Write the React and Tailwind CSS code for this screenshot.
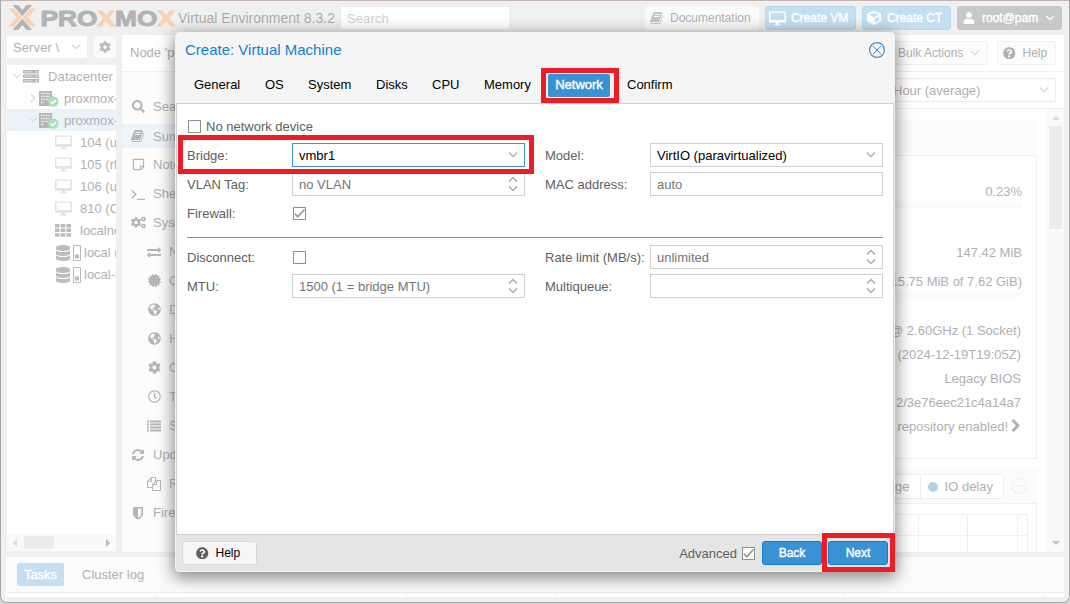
import React from "react";
import {
  FaSearch, FaCogs, FaCog, FaCertificate, FaGlobeAmericas, FaRegClock,
  FaCube, FaUser, FaQuestionCircle, FaRegStickyNote, FaDatabase,
} from "react-icons/fa";

const FONT = "font-['Liberation_Sans',Arial,sans-serif]";

const BOOK = "M1639 478q40 57 18 129l-275 906q-19 64-76.5 107.5t-122.5 43.5h-923q-77 0-148.5-53.5t-99.5-131.5q-24-67-2-127 0-4 3-27t4-37q1-8-3-21.5t-3-19.5q2-11 8-21t16.5-23.5 16.5-23.5q23-38 45-91.5t30-91.5q3-10 .5-30t-.5-28q3-11 17-28t17-23q21-36 42-92t25-90q1-9-2.5-32t.5-28q4-13 22-30.5t22-22.5q19-26 42.5-84.5t27.5-96.5q1-8-3-25.5t-2-26.5q2-8 9-18t18-23 17-21q8-12 16.5-30.5t15-35 16-36 19.5-32 26.5-23.5 36-11.5 47.5 5.5l-1 3q38-9 51-9h761q74 0 114 56t18 130l-274 906q-36 119-71.5 153.5t-128.5 34.5h-869q-27 0-38 15-11 16-1 43 24 70 144 70h923q29 0 56-15.5t35-41.5l300-987q7-22 5-57 38 15 59 43zm-1064 2q-4 13 2 22.5t20 9.5h608q13 0 25.5-9.5t16.5-22.5l21-64q4-13-2-22.5t-20-9.5h-608q-13 0-25.5 9.5t-16.5 22.5zm-83 256q-4 13 2 22.5t20 9.5h608q13 0 25.5-9.5t16.5-22.5l21-64q4-13-2-22.5t-20-9.5h-608q-13 0-25.5 9.5t-16.5 22.5z";
const EXCHANGE = "M1792 1184v192q0 13-9.5 22.5t-22.5 9.5h-1376v192q0 13-9.5 22.5t-22.5 9.5q-12 0-24-10l-319-320q-9-9-9-22 0-14 9-23l320-320q9-9 23-9 13 0 22.5 9.5t9.5 22.5v192h1376q13 0 22.5 9.5t9.5 22.5zm0-544q0 14-9 23l-320 320q-9 9-23 9-13 0-22.5-9.5t-9.5-22.5v-192h-1376q-13 0-22.5-9.5t-9.5-22.5v-192q0-13 9.5-22.5t22.5-9.5h1376v-192q0-14 9-23t23-9q12 0 24 10l319 319q9 9 9 23z";
const REFRESH = "M1639 1056q0 5-1 7-64 268-268 434.5t-478 166.5q-146 0-282.5-55t-243.5-157l-129 129q-19 19-45 19t-45-19-19-45v-448q0-26 19-45t45-19h448q26 0 45 19t19 45-19 45l-137 137q71 66 161 102t187 36q134 0 250-65t186-179q11-17 53-117 8-23 30-23h192q13 0 22.5 9.5t9.5 22.5zm25-800v448q0 26-19 45t-45 19h-448q-26 0-45-19t-19-45 19-45l138-138q-148-137-349-137-134 0-250 65t-186 179q-11 17-53 117-8 23-30 23h-199q-13 0-22.5-9.5t-9.5-22.5v-7q65-268 270-434.5t480-166.5q146 0 284 55.5t245 156.5l130-129q19-19 45-19t45 19 19 45z";
const FILES = "M1696 384q40 0 68 28t28 68v1216q0 40-28 68t-68 28h-960q-40 0-68-28t-28-68v-288h-544q-40 0-68-28t-28-68v-672q0-40 20-88t48-76l408-408q28-28 76-48t88-20h416q40 0 68 28t28 68v328q68-40 128-40h416zm-544 213l-299 299h299v-299zm-640-384l-299 299h299v-299zm196 647l316-316v-416h-384v416q0 40-28 68t-68 28h-416v640h512v-256q0-40 20-88t48-76zm956 804v-1152h-384v416q0 40-28 68t-68 28h-416v640h896z";
const CHEVRON_BOLD = "M1363 877l-742 742q-19 19-45 19t-45-19l-166-166q-19-19-19-45t19-45l531-531-531-531q-19-19-19-45t19-45l166-166q19-19 45-19t45 19l742 742q19 19 19 45t-19 45z";

const Awesome = ({ d, className = "size-[14px]" }) => (
  <svg viewBox="0 0 1792 1792" className={`shrink-0 ${className}`} fill="currentColor"><path d={d} /></svg>
);
const Book = () => <Awesome d={BOOK} />;
const Exchange = () => <Awesome d={EXCHANGE} />;
const Refresh = () => <Awesome d={REFRESH} />;
const Files = () => <Awesome d={FILES} />;
const Terminal = () => (
  <svg viewBox="0 0 14 14" className="size-[14px]" fill="none" stroke="currentColor" strokeWidth="1.3">
    <path d="M0.8 3.2 4.8 7.2 0.8 11.2M6 12.3h8" />
  </svg>
);
const Cogs = () => <FaCogs className="size-[15px] shrink-0" />;
const Shield = () => (
  <svg viewBox="0 0 14 14" className="size-[14px]" fill="currentColor">
    <path fillRule="evenodd" d="M2 1h10v6.500q0 4-5 6-5-2-5-6zM7 2.600v9.200q3.400-1.700 3.400-4.300V2.600z" />
  </svg>
);
const Rows = () => (
  <svg viewBox="0 0 14 12" className="h-[12px] w-[14px] shrink-0" fill="currentColor">
    {[0.5, 3.5, 6.5, 9.5].map((y) => <path key={y} d={`M0 ${y}h2v2H0zM3 ${y}h11v2H3z`} />)}
  </svg>
);
const Grid = () => (
  <svg viewBox="0 0 16 13" className="h-[13px] w-[16px] shrink-0 text-[#bcbcbc]" fill="currentColor">
    {[0, 4.6, 9.2].map((y) => <path key={y} d={`M0 ${y}h4.600v3.500H0zM5.700 ${y}h4.600v3.500H5.700zM11.400 ${y}h4.600v3.500h-4.600z`} />)}
  </svg>
);
const Desktop = ({ className = "h-[15px] w-[17px]" }) => (
  <svg viewBox="0 0 17 15" className={`shrink-0 ${className}`} fill="currentColor">
    <path fillRule="evenodd" d="M1.2 0.5h14.6q1.2 0 1.2 1.2v9q0 1-1.2 1H10v1.3l1.8.5v1H5.2v-1L7 13v-1.300H1.200Q0 11.700 0 10.700v-9Q0 .5 1.200 .5zM1.500 1.800v7.200h14V1.800z" />
  </svg>
);
const Chevron = ({ className = "text-[#a0a0a0]" }) => (
  <svg viewBox="0 0 10 6" className={`h-[6px] w-[10px] shrink-0 ${className}`} fill="none" stroke="currentColor" strokeWidth="1.2">
    <path d="M1 0.700 5 4.700 9 0.700" />
  </svg>
);
const Spinner = () => (
  <svg viewBox="0 0 10 16" className="h-[16px] w-[10px] shrink-0 text-[#a0a0a0]" fill="none" stroke="currentColor" strokeWidth="1.2">
    <path d="M1 5.500 5 1.500 9 5.500M1 10.500 5 14.500 9 10.500" />
  </svg>
);

const Logo = () => (
  <svg viewBox="0 0 168 26" className="h-[26px] w-[168px] shrink-0">
    <path d="M0.500 3.500h5.500L14 12.500 6 21.500H0.500L8.500 12.500z" fill="#f9d2b3" />
    <path d="M28 3.500H22.500L14.500 12.500 22.500 21.500H28L20 12.500z" fill="#f9d2b3" />
    <path d="M4.500 0h5.700L14.300 5 18.500 0h5.700L14.300 11.300zM4.500 25h5.700l4.100-5 4.200 5h5.700L14.300 13.700z" fill="#b3b3b3" />
    <text x="32.500" y="20.600" textLength="134.500" lengthAdjust="spacingAndGlyphs" fontSize="22" fontWeight="700" fontFamily="Liberation Sans, Arial, sans-serif" fill="#b3b3b3" stroke="#b3b3b3" strokeWidth="0.900">
      PRO<tspan fill="#f9d2b3" stroke="#f9d2b3">X</tspan>MO<tspan fill="#f9d2b3" stroke="#f9d2b3">X</tspan>
    </text>
  </svg>
);

const Rack = () => (
  <svg viewBox="0 0 16 13" className="h-[13px] w-[16px] shrink-0">
    {[0, 4.500, 9].map((y) => (
      <g key={y}>
        <rect x="0" y={y} width="16" height="3.600" rx=".5" fill="#b5b5b5" />
        <path d={`M1.500 ${y + 1.800}h8`} stroke="#e4e4e4" strokeWidth="1" />
        <path d={`M12.500 ${y + 1.800}h2`} stroke="#eee" strokeWidth="1.200" />
      </g>
    ))}
  </svg>
);
const NodeIcon = () => (
  <svg viewBox="0 0 20 17" className="h-[17px] w-[20px] shrink-0">
    <path d="M0 1h13v15H0z" fill="#b5b5b5" />
    <path d="M2 3.500h9M2 6.500h9M2 9.500h9M2 12.500h3" stroke="#ededed" strokeWidth="1.400" strokeDasharray="1.700 .8" />
    <circle cx="14.300" cy="11.500" r="5.200" fill="#a9dfb9" />
    <path d="M11.700 11.500l2 2 3.400-3.600" stroke="#fff" strokeWidth="1.500" fill="none" />
  </svg>
);
const Storage = () => (
  <span className="flex shrink-0 items-center gap-[3px] pt-px text-[#bcbcbc]">
    <FaDatabase className="h-[16px] w-[14px]" />
    <svg viewBox="0 0 8 16" className="h-[16px] w-[8px]"><path d="M.5.500h7v15h-7z" fill="none" stroke="currentColor" /><path d="M2 9.500h4v4H2z" fill="currentColor" /></svg>
  </span>
);

const guests = ["104 (ubuntu)", "105 (rhel)", "106 (ubuntu)", "810 (CT)"];

const TreeRow = ({ icon, pad, text, active, arrow }) => (
  <div className={`flex h-[22px] shrink-0 items-center whitespace-nowrap ${pad} ${active ? "bg-[#eaf3fa]" : ""}`}>
    {arrow && <Chevron className={`text-[#dcdcdc] ${arrow}`} />}
    {icon}
    {text}
  </div>
);

const Tree = () => (
  <div className="flex h-[486px] w-[109px] flex-col overflow-hidden bg-white text-[#b0b0b0]">
    <TreeRow pad="pl-[5px] gap-[1px]" arrow=" " icon={<><Rack /><span className="w-[7px]" /></>} text={<span className="tracking-[0.150px]">Datacenter</span>} />
    <TreeRow pad="pl-[21px] gap-[1px]" arrow="-rotate-90" icon={<><NodeIcon /><span className="w-[3px] shrink-0" /></>} text="proxmox-01" />
    <TreeRow pad="pl-[21px] gap-[1px]" arrow=" " active icon={<><NodeIcon /><span className="w-[3px] shrink-0" /></>} text="proxmox-02" />
    {guests.map((g) => (
      <TreeRow key={g} pad="pl-[48px] gap-[8px]" icon={<span className="text-[#e3e3e3]"><Desktop /></span>} text={g} />
    ))}
    <TreeRow pad="pl-[48px] gap-[9px]" icon={<Grid />} text="localnetwork" />
    <TreeRow pad="pl-[49px] gap-[3px]" icon={<Storage />} text="local (proxmox)" />
    <TreeRow pad="pl-[49px] gap-[3px]" icon={<Storage />} text="local-lvm" />
    <div className="mt-auto flex h-[17px] shrink-0 items-center bg-[#fafafa] px-[6px]">
      <span className="h-0 w-0 border-y-[4px] border-r-[4px] border-y-transparent border-r-[#dcdcdc]" />
      <span className="ml-[7px] h-[13px] w-[30px] bg-[#ececec]" />
      <span className="ml-auto h-0 w-0 border-y-[4px] border-l-[4px] border-y-transparent border-l-[#b8b8b8]" />
    </div>
  </div>
);

const menu = [
  [FaSearch, "Search"], [Book, "Summary", 0, true], [FaRegStickyNote, "Notes"], [Terminal, "Shell"], [Cogs, "System"],
  [Exchange, "Network", 1], [FaCertificate, "Certificates", 1], [FaGlobeAmericas, "DNS", 1], [FaGlobeAmericas, "Hosts", 1],
  [FaCog, "Options", 1], [FaRegClock, "Time", 1], [Rows, "System Log", 1], [Refresh, "Updates"], [Files, "Repositories", 1],
  [Shield, "Firewall"],
];

const SideMenu = () => (
  <nav className="w-[150px] shrink-0 bg-[#fcfcfc] pt-[20px]">
    {menu.map(([Icon, label, sub, active]) => (
      <div key={label} className={`flex items-center whitespace-nowrap ${active ? "mt-[3px] mb-[2px] h-[24px] bg-[#edf4fa]" : "h-[29px]"} ${sub ? "pl-[25px]" : "pl-[9px]"}`}>
        <span className="flex w-[14px] justify-center text-[13px] text-[#b5b5b5]"><Icon /></span>
        <span className={sub ? "ml-[8px] text-[#bdbdbd]" : "ml-[8px]"}>{label}</span>
      </div>
    ))}
  </nav>
);

const Stat = ({ children, className = "" }) => (
  <div className={`flex h-[24px] items-center justify-end whitespace-nowrap ${className}`}>{children}</div>
);

const Content = () => (
  <div className="flex min-w-0 flex-1 flex-col bg-white">
    <div className="flex h-[37px] shrink-0 items-center justify-end border-b border-[#efefef] pr-[8px]">
      <div className="flex h-[24px] w-[200px] items-center border border-[#ebebeb] pr-[6px] pl-[36px]">
        <span>Hour (average)</span>
        <Chevron className="ml-auto text-[#cfcfcf]" />
      </div>
    </div>
    <div className="flex min-h-0 flex-1">
      <div className="flex-1 overflow-hidden pt-[10px] pr-[10px] pl-[10px]">
        <div className="h-[36px] bg-[#fbfbfb]" />
        <div className="h-[304px] border border-[#efefef] px-[14px] pt-[23px]">
          <Stat>0.23%</Stat>
          <div className="h-[5px] bg-[#fafafa]" />
          <Stat className="mt-[32px]">147.42 MiB</Stat>
          <Stat className="mt-[5px]">RAM usage 4.05% (315.75 MiB of 7.62 GiB)</Stat>
          <div className="h-[4px] bg-[#fafafa]" />
          <div className="mt-[21px] pr-px">
            <Stat>Intel(R) Xeon(R) CPU @ 2.60GHz (1 Socket)</Stat>
            <Stat>Linux 6.8.12-5-pve (2024-12-19T19:05Z)</Stat>
            <Stat>Legacy BIOS</Stat>
            <Stat>pve-manager/8.3.2/3e76eec21c4a14a7</Stat>
            <Stat>Non production-ready repository enabled!<span className="-mr-[2px] ml-px"><Awesome d={CHEVRON_BOLD} className="size-[14px]" /></span></Stat>
          </div>
        </div>
        <div className="mt-[10px] flex h-[34px] items-center justify-end bg-[#fbfbfb] pr-[10px]">
          <div className="flex h-[25px] items-center rounded-[3px] border border-[#ededed] bg-white">
            <span className="flex h-full items-center border-r border-[#ededed] pr-[10px] pl-[12px]">CPU usage</span>
            <span className="flex items-center gap-[7px] pr-[10px] pl-[7px]"><i className="mt-[2px] size-[10px] rounded-full bg-[#b7cfe3]" />IO delay</span>
          </div>
          <svg viewBox="0 0 16 16" className="ml-[7px] size-[16px]" fill="none" stroke="#e3edf5"><circle cx="8" cy="8" r="7.300" /><path d="M3 8h10" /></svg>
        </div>
        <div className="h-[60px] border border-[#efefef] px-[8px] pt-[10px]">
          <svg viewBox="0 0 330 50" className="float-right h-[50px] w-[330px]" fill="none" stroke="#f0f0f0">
            <path d="M0 .5h329.500V50M0 21.500h330M220.500 0v50M269.500 0v50M319.500 0v50M171.500 0v50" />
          </svg>
        </div>
      </div>
      <div className="flex w-[17px] flex-col items-center bg-[#fafafa] pt-[7px] pb-[7px]">
        <span className="h-0 w-0 border-x-[4px] border-b-[4px] border-x-transparent border-b-[#dcdcdc]" />
        <span className="mt-[6px] h-[103px] w-[13px] bg-[#ececec]" />
        <span className="mt-auto h-0 w-0 border-x-[4px] border-t-[4px] border-x-transparent border-t-[#c4c4c4]" />
      </div>
    </div>
  </div>
);

const STRONG = "[-webkit-text-stroke:0.4px_currentColor]";

const HeaderButton = ({ className, children }) => (
  <div className={`flex h-[24px] shrink-0 items-center rounded-[3px] border text-[12px] whitespace-nowrap ${className}`}>{children}</div>
);

const Header = () => (
  <header className="flex h-[34px] shrink-0 items-center pr-[7px] pl-[7px]">
    <Logo />
    <span className="ml-[2px] w-[159px] text-[14px] whitespace-nowrap text-[#adadad]">Virtual Environment 8.3.2</span>
    <div className="ml-[4px] flex h-[22px] w-[168px] items-center bg-white pl-[6px] tracking-[0.100px] text-[#d0d0d0]">Search</div>
    <div className="ml-auto flex gap-[6px] text-[#b0b0b0]">
      <HeaderButton className="w-[114px] border-[#f8f8f8] bg-[#fafafa] pl-[4px]"><span className="text-[#c4c4c4]"><Book /></span><span className="ml-[6px]">Documentation</span></HeaderButton>
      <HeaderButton className="w-[91px] border-[#b9d9ef] bg-[#c4dff2] pl-[3px] text-white"><Desktop /><span className={`ml-[5px] ${STRONG}`}>Create VM</span></HeaderButton>
      <HeaderButton className="w-[89px] border-[#b9d9ef] bg-[#c4dff2] pl-[4px] text-white"><FaCube className="size-[14px]" /><span className={`ml-[6px] ${STRONG}`}>Create CT</span></HeaderButton>
      <HeaderButton className="w-[105px] border-[#c6c6c6] bg-[#c8c8c8] pl-[5px] text-white"><FaUser className="size-[12px]" /><span className={`ml-[7px] ${STRONG}`}>root@pam</span><Chevron className="ml-[7px] text-white" /></HeaderButton>
    </div>
  </header>
);

const tabs = [["General", "w-[71px]"], ["OS", "w-[43px]"], ["System", "w-[68px]"], ["Disks", "w-[56px]"], ["CPU", "w-[52px]"], ["Memory", "w-[64px]"], ["Network", "w-[62px]"], ["Confirm", "w-[65px]"]];
const tabStyle = (t) => {
  if (t === "Network") return `ml-[12px] justify-center bg-[#3892d4] text-white ${STRONG}`;
  if (t === "Confirm") return "pl-[17px]";
  return "pl-[12px]";
};

const Box = ({ checked }) => (
  <span className="flex size-[13px] shrink-0 items-center justify-center border border-[#8f8f8f] bg-white">
    {checked && <svg viewBox="0 0 11 11" className="size-[11px]" fill="none" stroke="#888" strokeWidth="1.400"><path d="M.8 5.800 3.800 8.800 10.500 1.500" /></svg>}
  </span>
);
const Label = ({ children }) => <span className="w-[105px] shrink-0 whitespace-nowrap">{children}</span>;
const Field = ({ label, value, kind, dark, focus }) => (
  <div className="flex h-[24px] items-center">
    <Label>{label}</Label>
    <div className={`flex h-[24px] w-[233px] items-center justify-between border bg-white pr-[6px] pl-[6px] ${focus ? "border-[#3892d4]" : "border-[#cfcfcf]"} ${dark ? "text-black" : "text-[#757575]"}`}>
      <span>{value}</span>
      {kind === "combo" && <Chevron />}
      {kind === "spin" && <Spinner />}
    </div>
  </div>
);
const CheckField = ({ label, checked }) => (
  <div className="flex h-[24px] items-center"><Label>{label}</Label><span className="pt-px pl-[1px]"><Box checked={checked} /></span></div>
);
const Column = ({ children }) => <div className="flex flex-col gap-[5px]">{children}</div>;

const Dialog = () => (
  <section className="absolute top-[32px] left-[175px] flex h-[540px] w-[720px] flex-col rounded-[4px] border border-[#f1f1f1] bg-[#f5f5f5] text-[#606060] shadow-[0_4px_16px_2px_rgba(0,0,0,0.450)]">
    <div className="flex h-[34px] shrink-0 items-center justify-between pr-[9px] pb-px pl-[9px] text-[15px] text-[#157fcc]">
      Create: Virtual Machine
      <svg viewBox="0 0 16 16" className="size-[16px]" fill="none" stroke="#3d8fd0"><circle cx="8" cy="8" r="7.400" strokeWidth="1.200" /><path d="M4 4l8 8M12 4l-8 8" /></svg>
    </div>
    <div className="flex h-[36px] shrink-0 items-start pt-[7px] pl-[6px] text-black">
      {tabs.map(([t, w]) => (
        <div key={t} className={`flex h-[23px] shrink-0 items-center rounded-[2px] pb-px leading-[16px] ${w} ${tabStyle(t)}`}>{t}</div>
      ))}
    </div>
    <div className="flex-1 border border-[#cfcfcf] bg-white pt-[9px] pl-[10px]">
      <div className="mb-[3px] flex h-[27px] items-center gap-[5px] pl-[1px]"><Box /><span>No network device</span></div>
      <div className="flex gap-[20px]">
        <Column><Field label="Bridge:" value="vmbr1" kind="combo" dark focus /><Field label="VLAN Tag:" value="no VLAN" kind="spin" /><CheckField label="Firewall:" checked /></Column>
        <Column><Field label="Model:" value="VirtIO (paravirtualized)" kind="combo" dark /><Field label="MAC address:" value="auto" /></Column>
      </div>
      <div className="mt-[12px] mb-[7px] h-px w-[696px] bg-[#919191]" />
      <div className="flex gap-[20px]">
        <Column><CheckField label="Disconnect:" /><Field label="MTU:" value="1500 (1 = bridge MTU)" kind="spin" /></Column>
        <Column><Field label="Rate limit (MB/s):" value="unlimited" kind="spin" /><Field label="Multiqueue:" value="" kind="spin" /></Column>
      </div>
    </div>
    <div className="flex h-[36px] shrink-0 items-center rounded-b-[3px] bg-[#e5e5e5] pr-[6px] pl-[6px]">
      <div className="flex h-[24px] w-[75px] items-center rounded-[3px] border border-[#d8d8d8] bg-[#f6f6f6] pl-[13px] text-[12px] text-black"><FaQuestionCircle className="size-[12.500px] text-[#606060]" /><span className="ml-[7px]">Help</span></div>
      <span className="mr-[5px] ml-auto">Advanced</span><Box checked />
      <div className={`ml-[7px] flex h-[24px] w-[60px] items-center justify-center rounded-[3px] border border-[#157fcc] bg-[#3892d4] text-[12px] text-white ${STRONG}`}>Back</div>
      <div className={`ml-[6px] flex h-[24px] w-[60px] items-center justify-center rounded-[3px] border border-[#157fcc] bg-[#3892d4] text-[12px] text-white ${STRONG}`}>Next</div>
    </div>
  </section>
);

export default function App() {
  return (
    <div className={`relative h-[604px] w-[1070px] overflow-hidden bg-[#d6d6d6] text-[13px] leading-[17px] ${FONT}`}>
      <div className="flex h-[603px] flex-col overflow-hidden rounded-b-[7px] border border-[#a8a8a8] border-t-[#c6b6b3] bg-[#f0f0f0] text-[#b0b0b0]">
        <Header />
        <div className="flex h-[517px] shrink-0 gap-[6px] pl-[6px]">
          <aside className="pt-px">
            <div className="mb-[7px] flex justify-between">
              <div className="flex h-[22px] w-[80px] items-center justify-between bg-white pr-[6px] pl-[6px] tracking-[0.100px]">Server \<Chevron className="text-[#d4d4d4]" /></div>
              <div className="flex h-[22px] w-[22px] items-center justify-center rounded-[2px] bg-[#f9f9f9]"><FaCog className="size-[12px] text-[#bbb]" /></div>
            </div>
            <Tree />
          </aside>
          <main className="flex w-[942px] flex-col bg-white">
            <div className="flex h-[37px] shrink-0 items-center justify-end border-b border-[#efefef] pr-[8px] pl-[8px]">
              <span className="mr-auto leading-[16px] pb-px">Node 'proxmox-02'</span>
              <div className="flex h-[24px] w-[120px] items-center rounded-[3px] border border-[#f0f0f0] bg-[#fcfcfc] pr-[7px] pl-[29px] text-[12px] whitespace-nowrap">Bulk Actions<Chevron className="ml-auto text-[#d4d4d4]" /></div>
              <div className="ml-[9px] flex h-[24px] w-[59px] items-center rounded-[3px] border border-[#f0f0f0] bg-[#fcfcfc] pl-[5px] text-[12px]"><FaQuestionCircle className="size-[12.500px]" /><span className="ml-[7px]">Help</span></div>
            </div>
            <div className="flex min-h-0 flex-1"><SideMenu /><Content /></div>
          </main>
        </div>
        <footer className="mt-[5px] ml-[5px] h-[40px] w-[1058px] shrink-0 bg-[#fbfbfb]">
          <div className="flex h-[36px] items-center border-b border-[#ededed] pl-[11px]">
            <div className={`flex h-[23px] w-[47px] items-center justify-center rounded-[2px] bg-[#c4dff2] text-white ${STRONG}`}>Tasks</div>
            <span className="ml-[18px]">Cluster log</span>
          </div>
          <div className="flex h-[3px] bg-white"><i className="w-[151px] border-r border-[#ededed]" /><i className="w-[250px] border-r border-[#ededed]" /><i className="w-[150px] border-r border-[#ededed]" /><i className="w-[288px] border-r border-[#ededed]" /><i className="w-[200px] border-r border-[#ededed]" /></div>
        </footer>
      </div>
      <Dialog />
      <div className="absolute top-[68px] left-[541px] h-[35px] w-[78px] border-[5px] border-[#ee1c25]" />
      <div className="absolute top-[135px] left-[178px] h-[39px] w-[356px] border-[5px] border-[#ee1c25]" />
      <div className="absolute top-[533px] left-[822px] h-[39px] w-[73px] border-[5px] border-[#ee1c25]" />
    </div>
  );
}
